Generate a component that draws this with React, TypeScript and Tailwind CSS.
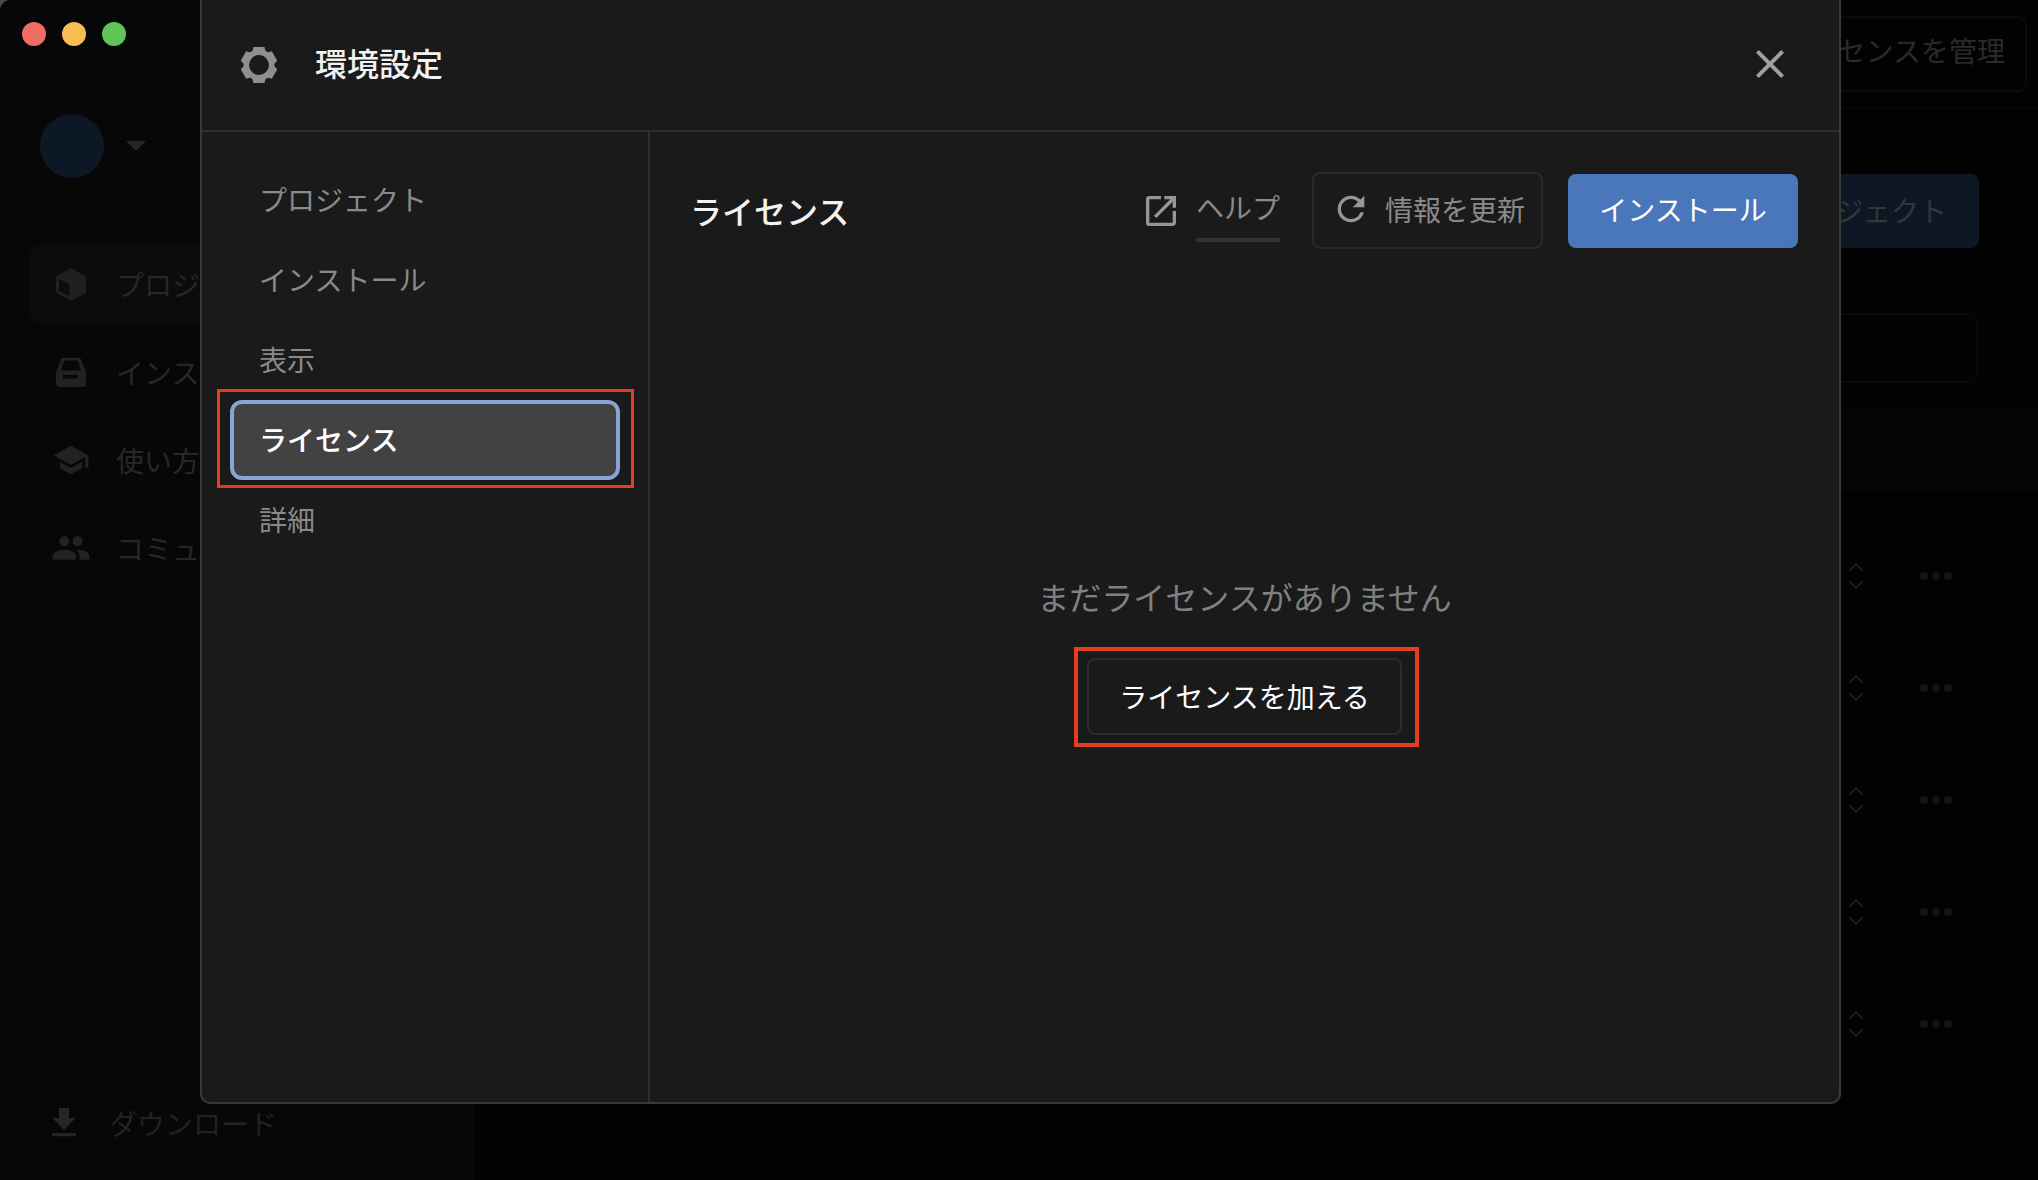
import React from 'react';
import { MdClose, MdFileDownload, MdOpenInNew, MdPeople, MdRefresh, MdSchool } from 'react-icons/md';

function GearIcon() {
  return (
    <svg width="36" height="36" viewBox="0 0 36 36" fill="none">
      <circle cx="18" cy="18" r="12.750" stroke="#8f8f8f" strokeWidth="5.500" />
      {[0, 60, 120, 180, 240, 300].map((deg) => (
        <path key={deg} d="M12.500 0h11l2 8h-15Z" fill="#8f8f8f" transform={`rotate(${deg} 18 18)`} />
      ))}
    </svg>
  );
}

function CubeIcon() {
  return (
    <svg width="30" height="33" viewBox="0 0 30 33" fill="none">
      <path d="M15 0 30 8.200v16.600L15 33 0 24.800V8.200Z" fill="#202020" />
      <path d="M3 11 13.500 16.200V28L3 23Z" fill="#0c0c0c" />
    </svg>
  );
}

function DiskIcon() {
  return (
    <svg width="30" height="30" viewBox="0 0 30 30" fill="none">
      <path
        d="M7 1h16a2 2 0 0 1 2 1.400L29.500 14a3 3 0 0 1 .5 1.600V26a4 4 0 0 1-4 4H4a4 4 0 0 1-4-4V15.600A3 3 0 0 1 .5 14L5 2.400A2 2 0 0 1 7 1Z"
        fill="#222222"
      />
      <path d="M8.500 3.500h13L25 13.500H5Z" fill="#070707" />
      <rect x="7" y="18" width="15" height="3.500" fill="#070707" />
    </svg>
  );
}

function Chevrons() {
  return (
    <svg width="18" height="28" viewBox="0 0 18 28" fill="none" stroke="#1b1b1b" strokeWidth="2">
      <path d="M2 9 9 2l7 7" />
      <path d="M2 19l7 7 7-7" />
    </svg>
  );
}

const backNav = [
  { label: 'プロジェクト', icon: <CubeIcon />, active: true },
  { label: 'インストール', icon: <DiskIcon />, active: false },
  { label: '使い方を学ぶ', icon: <MdSchool size={38} color="#222222" />, active: false },
  { label: 'コミュニティ', icon: <MdPeople size={40} color="#222222" />, active: false },
];

const settingsNav = ['プロジェクト', 'インストール', '表示', 'ライセンス', '詳細'];

function BackgroundApp() {
  return (
    <div className="flex h-full w-full overflow-hidden rounded-tl-[10px]">
      <aside className="flex h-full w-[475px] shrink-0 flex-col bg-[#070707]">
        <div className="flex gap-[16px] pl-[22px] pt-[22px]">
          <span className="h-[24px] w-[24px] rounded-full bg-[#ef6c62]" />
          <span className="h-[24px] w-[24px] rounded-full bg-[#f6bd50]" />
          <span className="h-[24px] w-[24px] rounded-full bg-[#60c554]" />
        </div>
        <div className="ml-[40px] mt-[68px] flex items-center gap-[22px]">
          <div className="h-[64px] w-[64px] rounded-full bg-[#0d1826]" />
          <div className="h-0 w-0 border-x-[10px] border-t-[10px] border-x-transparent border-t-[#252525]" />
        </div>
        <nav className="mx-[29px] mt-[66px] flex flex-col gap-[8px]">
          {backNav.map((item) => (
            <div
              key={item.label}
              className={`flex h-[80px] items-center gap-[25px] rounded-[14px] px-[22px] text-[28px] text-[#272727] ${
                item.active ? 'bg-[#0c0c0c]' : ''
              }`}
            >
              <span className="flex w-[40px] justify-center">{item.icon}</span>
              {item.label}
            </div>
          ))}
        </nav>
        <div className="mt-auto flex h-[122px] items-center gap-[25px] border-t border-[#0b0b0b] pl-[44px] pt-[6px] text-[28px] text-[#222222]">
          <MdFileDownload size={40} color="#262626" />
          ダウンロード
        </div>
      </aside>
      <main className="flex min-w-0 flex-1 flex-col bg-[#020202]">
        <header className="flex h-[108px] shrink-0 items-center justify-end border-b border-[#0a0a0a] pr-[11px]">
          <div className="flex h-[76px] items-center rounded-[8px] border-2 border-[#0b0b0b] px-[20px] pb-[7px] text-[28px] text-[#2a2a2a]">
            ライセンスを管理
          </div>
        </header>
        <div className="flex justify-end pr-[59px] pt-[66px]">
          <div className="flex h-[74px] items-center rounded-[8px] bg-[#0e1824] px-[32px] pb-[2px] text-[28px] text-[#33363b]">
            新しいプロジェクト
          </div>
        </div>
        <div className="ml-[40px] mr-[60px] mt-[65px] h-[70px] shrink-0 rounded-[8px] border-2 border-[#090909]" />
        <div className="mt-[25px] h-[84px] shrink-0 bg-[#050505]" />
        <div className="mt-[28px] flex flex-col">
          {[0, 1, 2, 3, 4].map((row) => (
            <div key={row} className="flex h-[112px] items-center justify-end gap-[55px] pr-[86px]">
              <Chevrons />
              <div className="flex gap-[4px]">
                <span className="h-[8px] w-[8px] rounded-full bg-[#141414]" />
                <span className="h-[8px] w-[8px] rounded-full bg-[#141414]" />
                <span className="h-[8px] w-[8px] rounded-full bg-[#141414]" />
              </div>
            </div>
          ))}
        </div>
      </main>
    </div>
  );
}

function SettingsModal() {
  return (
    <div className="absolute left-[200px] top-0 flex h-[1104px] w-[1641px] flex-col rounded-b-[10px] border-x-2 border-b-2 border-[#3a3a3a] bg-[#1a1a1a]">
      <div className="flex h-[132px] shrink-0 items-center border-b-2 border-[#2f2f2f] pl-[39px] pr-[45px]">
        <GearIcon />
        <h1 className="mb-[7px] ml-[38px] text-[32px] font-medium text-[#f2f2f2]">環境設定</h1>
        <MdClose size={48} color="#a0a0a0" className="mb-[2px] ml-auto" />
      </div>
      <div className="flex min-h-0 flex-1">
        <nav className="w-[448px] shrink-0 border-r-2 border-[#2f2f2f] px-[28px] pt-[27px]">
          {settingsNav.map((label) =>
            label === 'ライセンス' ? (
              <div key={label} className="relative flex h-[80px] items-center">
                <div className="flex h-full w-full translate-y-px items-center rounded-[12px] border-4 border-[#85a6d4] bg-[#424242] pb-[2px] pl-[25px] text-[28px] font-medium text-white">
                  {label}
                </div>
                <div className="pointer-events-none absolute -bottom-[9px] -left-[13px] -right-[14px] -top-[10px] border-[3px] border-[#e63c1f]" />
              </div>
            ) : (
              <div key={label} className="flex h-[80px] items-center pb-[1px] pl-[29px] text-[28px] text-[#8a8a8a]">
                {label}
              </div>
            ),
          )}
        </nav>
        <section className="flex min-w-0 flex-1 flex-col pt-[40px]">
          <div className="flex items-center pl-[40px] pr-[41px]">
            <h2 className="mb-[2px] text-[32px] font-medium leading-[40px] text-[#f2f2f2]">ライセンス</h2>
            <div className="ml-auto flex items-center gap-[15px] text-[#8a8a8a]">
              <MdOpenInNew size={40} color="#969696" />
              <span className="mt-[11px] border-b-4 border-[#333333] pb-[15px] text-[28px] leading-[32px]">ヘルプ</span>
            </div>
            <button className="ml-[32px] flex h-[77px] w-[231px] items-center gap-[14px] rounded-[8px] border-2 border-[#2a2a2a] pb-[3px] pl-[17px] text-[28px] text-[#8a8a8a]">
              <MdRefresh size={40} color="#969696" />
              情報を更新
            </button>
            <button className="ml-[25px] flex h-[74px] w-[230px] items-center justify-center rounded-[8px] bg-[#4a77bb] pb-[3px] text-[28px] text-white">
              インストール
            </button>
          </div>
          <div className="mt-[327px] flex flex-col items-center">
            <p className="text-[32px] leading-[40px] text-[#808080]">まだライセンスがありません</p>
            <div className="relative mt-[42px]">
              <button className="flex h-[77px] w-[315px] items-center justify-center rounded-[8px] border-2 border-[#2c2c2c] pb-[2px] text-[28px] text-white">
                ライセンスを加える
              </button>
              <div className="pointer-events-none absolute -bottom-[12px] -left-[13px] -right-[17px] -top-[11px] border-4 border-[#e63c1f]" />
            </div>
          </div>
        </section>
      </div>
    </div>
  );
}

export default function App() {
  return (
    <div className="relative h-[1180px] w-[2038px] overflow-hidden bg-[#4a4a4a] font-['Noto_Sans_CJK_JP','Liberation_Sans',sans-serif]">
      <BackgroundApp />
      <SettingsModal />
    </div>
  );
}
